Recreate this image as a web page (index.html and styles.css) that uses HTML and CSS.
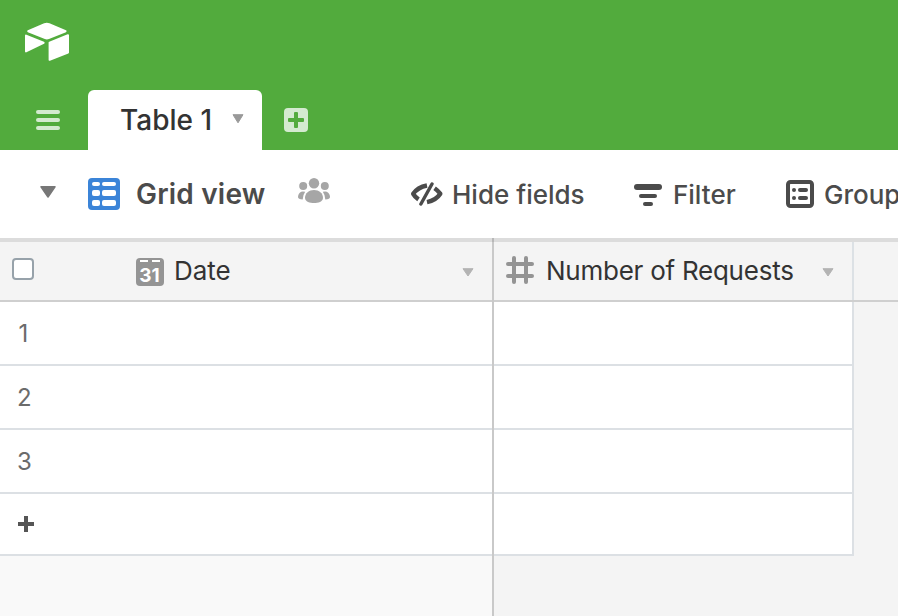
FILE: index.html
```html
<!DOCTYPE html>
<html lang="en">
<head>
<meta charset="utf-8">
<title>Table 1</title>
<link rel="stylesheet" href="styles.css">
</head>
<body>
<header class="topbar">
  <svg class="logo" width="46" height="40" viewBox="0 0 46 40" fill="#fff" stroke="#fff" stroke-linejoin="round" stroke-width="2">
    <path d="M4.2 9.2 20.5 2.2Q22.8 1.3 25.1 2.2L41.6 9.2 24.6 16.1Q22.9 16.8 21.2 16.1Z"/>
    <path d="M2 13.6 19.6 20.8 2 29.4Z"/>
    <path d="M25.6 20.6 44 13.2V30.6L25.6 37.8Z"/>
  </svg>
  <nav class="tabs">
    <svg class="menu" width="24" height="20" viewBox="0 0 24 20" fill="#d4ead0"><rect width="24" height="4" rx="2"/><rect y="8" width="24" height="4" rx="2"/><rect y="16" width="24" height="4" rx="2"/></svg>
    <div class="tab"><span class="tab-name">Table 1</span><svg class="tab-arrow" width="12" height="10" viewBox="0 0 12 10"><path d="M1 .7H11L6 8.8Z" fill="#999" stroke="#999" stroke-linejoin="round"/></svg></div>
    <svg class="add" width="24" height="24" viewBox="0 0 24 24"><rect width="24" height="24" rx="4" fill="#d4ead0"/><g fill="#52ab3d"><rect x="10" y="4" width="4" height="16" rx="1"/><rect x="4" y="10" width="16" height="4" rx="1"/></g></svg>
  </nav>
</header>
<div class="toolbar">
  <svg class="view-arrow" width="16" height="12" viewBox="0 0 16 12"><path d="M1 .8H15L8 11Z" fill="#777" stroke="#777" stroke-width="1.5" stroke-linejoin="round"/></svg>
  <svg class="grid-icon" width="32" height="32" viewBox="0 0 32 32"><rect width="32" height="32" rx="4" fill="#3b84d8"/><g fill="#fff"><rect x="4" y="4" width="8" height="4" rx="2"/><rect x="14" y="4" width="14" height="4" rx="2"/><rect x="4" y="12" width="8" height="6" rx="2"/><rect x="14" y="12" width="14" height="6" rx="2"/><rect x="4" y="22" width="8" height="6" rx="2"/><rect x="14" y="22" width="14" height="6" rx="2"/></g></svg>
  <span class="view-name">Grid view</span>
  <svg class="people" width="32" height="26" viewBox="0 0 32 26" fill="#a6a6a6"><circle cx="16" cy="5.2" r="5.2"/><circle cx="5.2" cy="8" r="4"/><circle cx="26.8" cy="8" r="4"/><path d="M16 12C21 12 25 15.2 25 19.8 25 24 20 25 16 25S7 24 7 19.8C7 15.2 11 12 16 12Z"/><path d="M3.2 13.7Q4.6 13.2 7.2 13.7 5 16.6 4.7 21.4 0 21.2 0 19 0 15.5 3.2 13.7ZM28.8 13.7Q27.4 13.2 24.8 13.7 27 16.6 27.3 21.4 32 21.2 32 19 32 15.5 28.8 13.7Z"/></svg>
  <div class="action hide">
    <svg width="33" height="24" viewBox="0 0 33 24" fill="none" stroke="#4b4b4b" stroke-width="4.4"><path d="M17 3.5Q7.5 5.4 3.2 11.8 5 15 8.5 17.4" stroke-linejoin="round"/><path d="M24.6 6.2Q28.4 8.8 30.3 11.8 26.1 18.3 17 20.2" stroke-linejoin="round"/><path d="M22 2 10.9 22" stroke-width="3.4" stroke-linecap="round"/></svg>
    <span>Hide fields</span>
  </div>
  <div class="action filter">
    <svg width="28" height="22" viewBox="0 0 28 22" fill="#4b4b4b"><rect width="28" height="6" rx="3"/><rect x="5" y="10" width="18" height="4" rx="2"/><rect x="9" y="18" width="10" height="4" rx="2"/></svg>
    <span>Filter</span>
  </div>
  <div class="action group">
    <svg width="28" height="28" viewBox="0 0 28 28" fill="#4b4b4b"><rect x="2" y="2" width="24" height="24" rx="2.5" fill="none" stroke="#4b4b4b" stroke-width="4"/><circle cx="8" cy="10" r="2"/><circle cx="8" cy="18" r="2"/><rect x="12" y="8" width="10" height="4" rx="2"/><rect x="12" y="16" width="10" height="4" rx="2"/></svg>
    <span>Group</span>
  </div>
</div>
<main class="sheet">
  <section class="pane frozen">
    <div class="head">
      <span class="checkbox"></span>
      <span class="calendar"><i></i><b>31</b></span>
      <span class="field">Date</span>
      <svg class="caret" width="12" height="9" viewBox="0 0 12 9"><path d="M1 .7H11L6 8Z" fill="#b3b3b3" stroke="#b3b3b3" stroke-linejoin="round"/></svg>
    </div>
    <div class="row first">1</div>
    <div class="row">2</div>
    <div class="row">3</div>
    <div class="row last"><svg width="16" height="16" viewBox="0 0 16 16"><path d="M8 0V16M0 8H16" stroke="#555" stroke-width="4"/></svg></div>
  </section>
  <div class="divider"></div>
  <section class="pane fields">
    <div class="head">
      <div class="cell-head">
        <svg class="hash" width="28" height="28" viewBox="0 0 28 28" stroke="#949494" stroke-width="4" stroke-linecap="round"><path d="M8 2V26M20 2V26M2 8H26M2 20H26"/></svg>
        <span class="field">Number of Requests</span>
        <svg class="caret" width="12" height="9" viewBox="0 0 12 9"><path d="M1 .7H11L6 8Z" fill="#b3b3b3" stroke="#b3b3b3" stroke-linejoin="round"/></svg>
      </div>
    </div>
    <div class="row"></div>
    <div class="row"></div>
    <div class="row"></div>
    <div class="row last"></div>
  </section>
</main>
</body>
</html>
```
FILE: styles.css
```css
* { box-sizing: border-box; }
body {
  margin: 0;
  width: 898px;
  height: 616px;
  overflow: hidden;
  display: flex;
  flex-direction: column;
  font-family: Inter, "Liberation Sans", sans-serif;
  font-size: 26px;
  color: #333;
  background: #fff;
}
svg { display: block; flex: none; }
span { white-space: nowrap; }

.topbar {
  height: 150px;
  background: #52ab3d;
  display: flex;
  flex-direction: column;
  justify-content: space-between;
}
.logo { margin: 22px 0 0 24px; }
.tabs { display: flex; height: 60px; align-items: center; }
.menu { margin: 0 28px 0 36px; }
.tab {
  width: 174px;
  height: 60px;
  padding-left: 32px;
  display: flex;
  align-items: center;
  background: #fff;
  border-radius: 6px 6px 0 0;
}
.tab-name { width: 112px; font-size: 28px; font-weight: 500; letter-spacing: 0; }
.tab-arrow { margin-top: -2px; }
.add { margin-left: 22px; }

.toolbar {
  height: 88px;
  display: flex;
  align-items: center;
  color: #4b4b4b;
  font-weight: 500;
}
.view-arrow { margin: -4px 32px 0 40px; }
.view-name { width: 162px; margin-left: 16px; font-size: 28px; font-weight: 600; letter-spacing: 0.2px; }
.view-arrow, .grid-icon, .view-name { flex: none; }
.people { margin-top: -6px; }
.action { display: flex; align-items: center; flex: none; }
.hide { width: 224px; margin-left: 80px; gap: 9px; }
.filter { width: 152px; gap: 11px; }
.filter svg { margin-top: 1px; }
.group { gap: 10px; }

.sheet { height: 378px; display: flex; }
.pane { display: flex; flex-direction: column; }
.frozen { width: 492px; background: #f9f9f9; }
.fields { width: 404px; background: #f4f4f4; }
.divider { width: 2px; background: linear-gradient(#b8b8b8 4px, #c9c9c9 4px); }
.head {
  height: 64px;
  border-top: 4px solid #dcdcdc;
  border-bottom: 2px solid #cfcfcf;
  background: #f4f4f4;
  display: flex;
  align-items: center;
}
.checkbox {
  width: 22px;
  height: 22px;
  margin: -4px 102px 0 12px;
  border: 2px solid #97a2aa;
  border-radius: 4px;
  background: #fff;
}
.calendar {
  width: 28px;
  height: 28px;
  margin-top: 1px;
  padding-top: 2px;
  border-radius: 4px;
  background: #949494;
  color: #fff;
}
.calendar i { display: block; width: 20px; height: 2px; margin: 0 4px; background: linear-gradient(90deg, #fff 8px, transparent 8px 12px, #fff 12px); }
.calendar b { display: block; margin-left: -1px; text-align: center; font-size: 19px; line-height: 27px; }
.frozen .field { width: 288px; margin-left: 10px; }
.field { padding-bottom: 2px; }
.caret { margin-top: 2px; }
.cell-head {
  width: 360px;
  height: 58px;
  padding-left: 12px;
  border-right: 2px solid #dce1e5;
  display: flex;
  align-items: center;
}
.hash { margin-top: -2px; }
.cell-head .field { width: 276px; margin-left: 12px; letter-spacing: -0.25px; }
.row {
  height: 64px;
  padding: 1px 0 0 17px;
  border-bottom: 2px solid #dce0e4;
  background: #fff;
  display: flex;
  align-items: center;
  font-size: 24px;
  color: #6b6b6b;
}
.first { padding-left: 18.5px; }
.last { height: 62px; padding: 0 0 0 18px; }
.fields .row { width: 360px; border-right: 2px solid #dce0e4; }
```
